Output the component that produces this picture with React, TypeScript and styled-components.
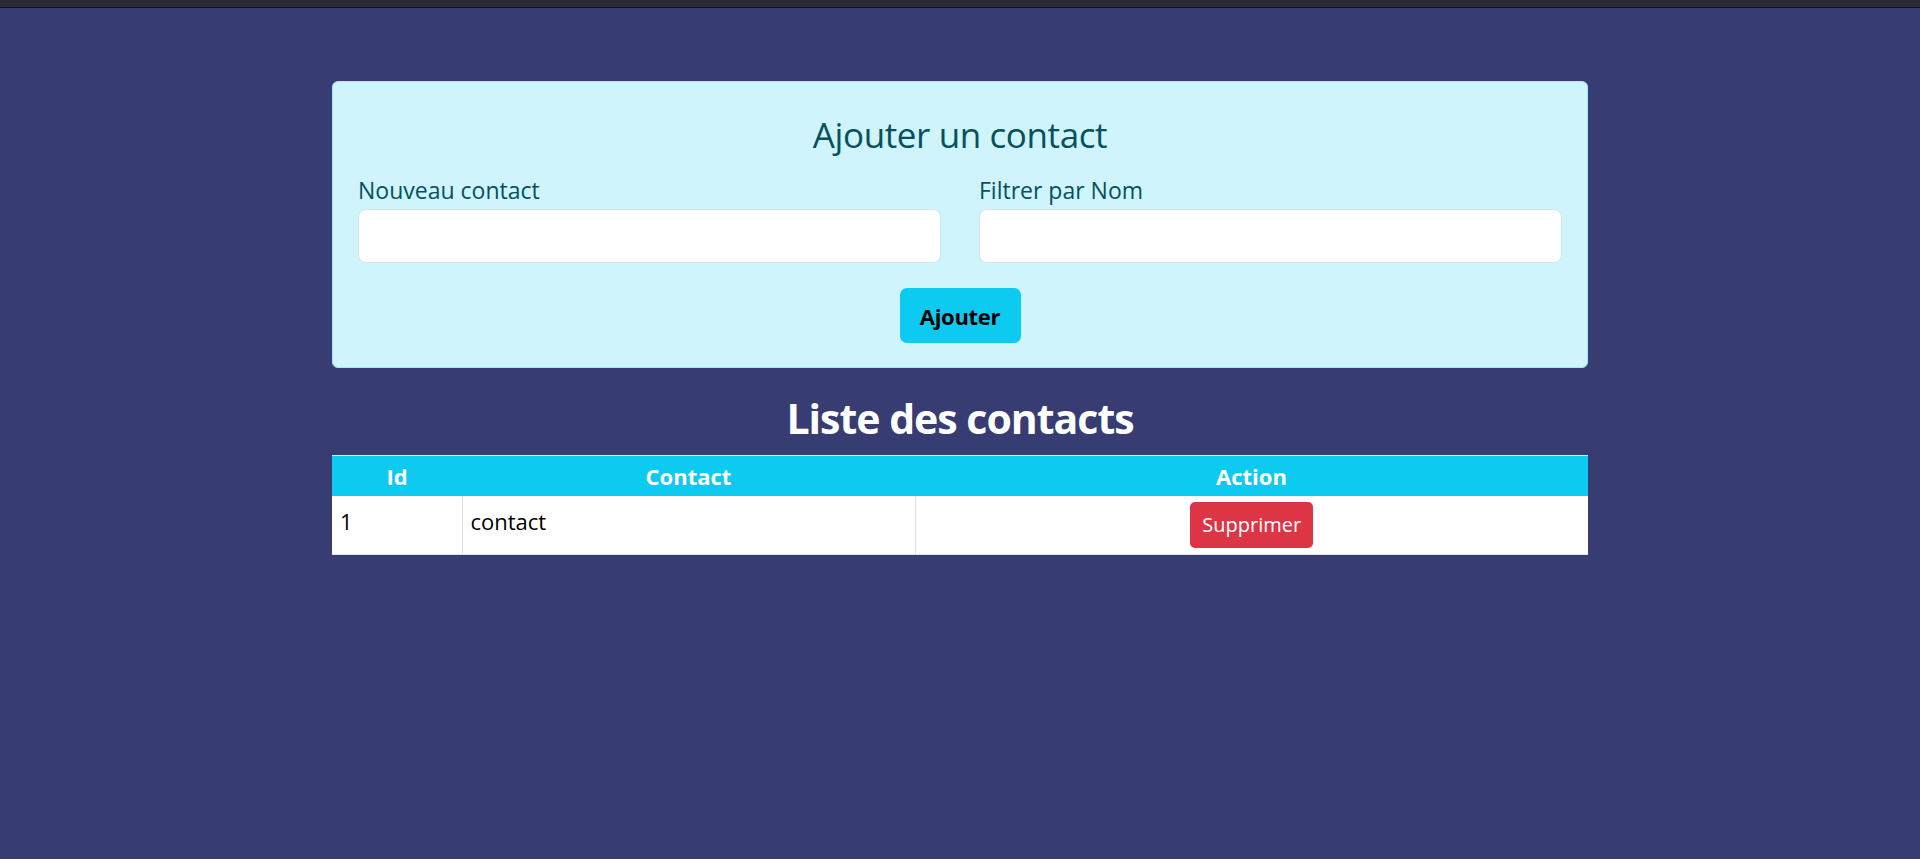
import { createGlobalStyle, styled } from 'styled-components'

const GlobalStyle = createGlobalStyle`
  html, body {
    margin: 0;
    padding: 0;
    background: #373c72;
  }
  body {
    font-family: 'Open Sans', 'Noto Sans', sans-serif;
    color: #212529;
  }
  * {
    box-sizing: border-box;
  }
`

const TopStrip = styled.div`
  height: 8px;
  background: #2b2a33;
  border-bottom: 1px solid #111117;
`

const Container = styled.main`
  width: 1256px;
  margin: 73px auto 0;
`

const FormCard = styled.section`
  background: #cff4fc;
  border: 1px solid #9eeaf9;
  border-radius: 6px;
  padding: 32px 25px 24px;
  color: #055160;
`

const CardTitle = styled.h3`
  margin: 0 0 17px;
  font-size: 35px;
  font-weight: 400;
  line-height: 42px;
  letter-spacing: -0.4px;
  text-align: center;
`

const FieldRow = styled.div`
  display: grid;
  grid-template-columns: 1fr 1fr;
  gap: 38px;
`

const Field = styled.div`
  display: flex;
  flex-direction: column;
`

const Label = styled.label`
  font-size: 23px;
  line-height: 34px;
  margin-bottom: 2px;
`

const TextInput = styled.input`
  height: 54px;
  width: 100%;
  border: 1px solid #d6e3ea;
  border-radius: 8px;
  background: #fff;
  font-family: inherit;
  font-size: 22px;
  padding: 0 14px;
`

const Actions = styled.div`
  display: flex;
  justify-content: center;
  margin-top: 25px;
`

const AddButton = styled.button`
  height: 55px;
  width: 121px;
  border: none;
  border-radius: 7px;
  background: #0dcaf0;
  color: #000;
  font-family: inherit;
  font-size: 22px;
  font-weight: 700;
  letter-spacing: -0.3px;
  cursor: pointer;
`

const ListTitle = styled.h2`
  margin: 25px 0 12px;
  color: #fff;
  font-size: 41px;
  font-weight: 700;
  line-height: 50px;
  letter-spacing: -1px;
  text-align: center;
`

const Table = styled.table`
  width: 100%;
  border-collapse: collapse;
  background: #fff;
  table-layout: fixed;
`

const HeadCell = styled.th<{ $width: number }>`
  width: ${(p) => p.$width}px;
  height: 40px;
  padding: 0 8px;
  background: #0dcaf0;
  border-top: 1px solid #c9f1fa;
  color: #fff;
  font-size: 22px;
  font-weight: 700;
  text-align: center;
  vertical-align: middle;
`

const Cell = styled.td<{ $center?: boolean }>`
  padding: ${(p) => (p.$center ? '6px 8px' : '9px 8px 0')};
  height: 59px;
  border-bottom: 1px solid #dee2e6;
  border-left: 1px solid #dee2e6;
  font-size: 22px;
  line-height: 33px;
  color: #000;
  text-align: ${(p) => (p.$center ? 'center' : 'left')};
  vertical-align: ${(p) => (p.$center ? 'middle' : 'top')};

  &:first-child {
    border-left: none;
  }
`

const DeleteButton = styled.button`
  height: 46px;
  padding: 0 12px;
  border: none;
  border-radius: 5px;
  background: #dc3545;
  color: #fff;
  font-family: inherit;
  font-size: 20px;
  cursor: pointer;
`

const contacts = [{ id: 1, name: 'contact' }]

export default function App() {
  return (
    <>
      <GlobalStyle />
      <TopStrip />
      <Container>
        <FormCard>
          <CardTitle>Ajouter un contact</CardTitle>
          <FieldRow>
            <Field>
              <Label htmlFor='nouveau'>Nouveau contact</Label>
              <TextInput id='nouveau' type='text' />
            </Field>
            <Field>
              <Label htmlFor='filtre'>Filtrer par Nom</Label>
              <TextInput id='filtre' type='text' />
            </Field>
          </FieldRow>
          <Actions>
            <AddButton>Ajouter</AddButton>
          </Actions>
        </FormCard>

        <ListTitle>Liste des contacts</ListTitle>
        <Table>
          <thead>
            <tr>
              <HeadCell $width={130}>Id</HeadCell>
              <HeadCell $width={453}>Contact</HeadCell>
              <HeadCell $width={673}>Action</HeadCell>
            </tr>
          </thead>
          <tbody>
            {contacts.map((c) => (
              <tr key={c.id}>
                <Cell>{c.id}</Cell>
                <Cell>{c.name}</Cell>
                <Cell $center>
                  <DeleteButton>Supprimer</DeleteButton>
                </Cell>
              </tr>
            ))}
          </tbody>
        </Table>
      </Container>
    </>
  )
}
